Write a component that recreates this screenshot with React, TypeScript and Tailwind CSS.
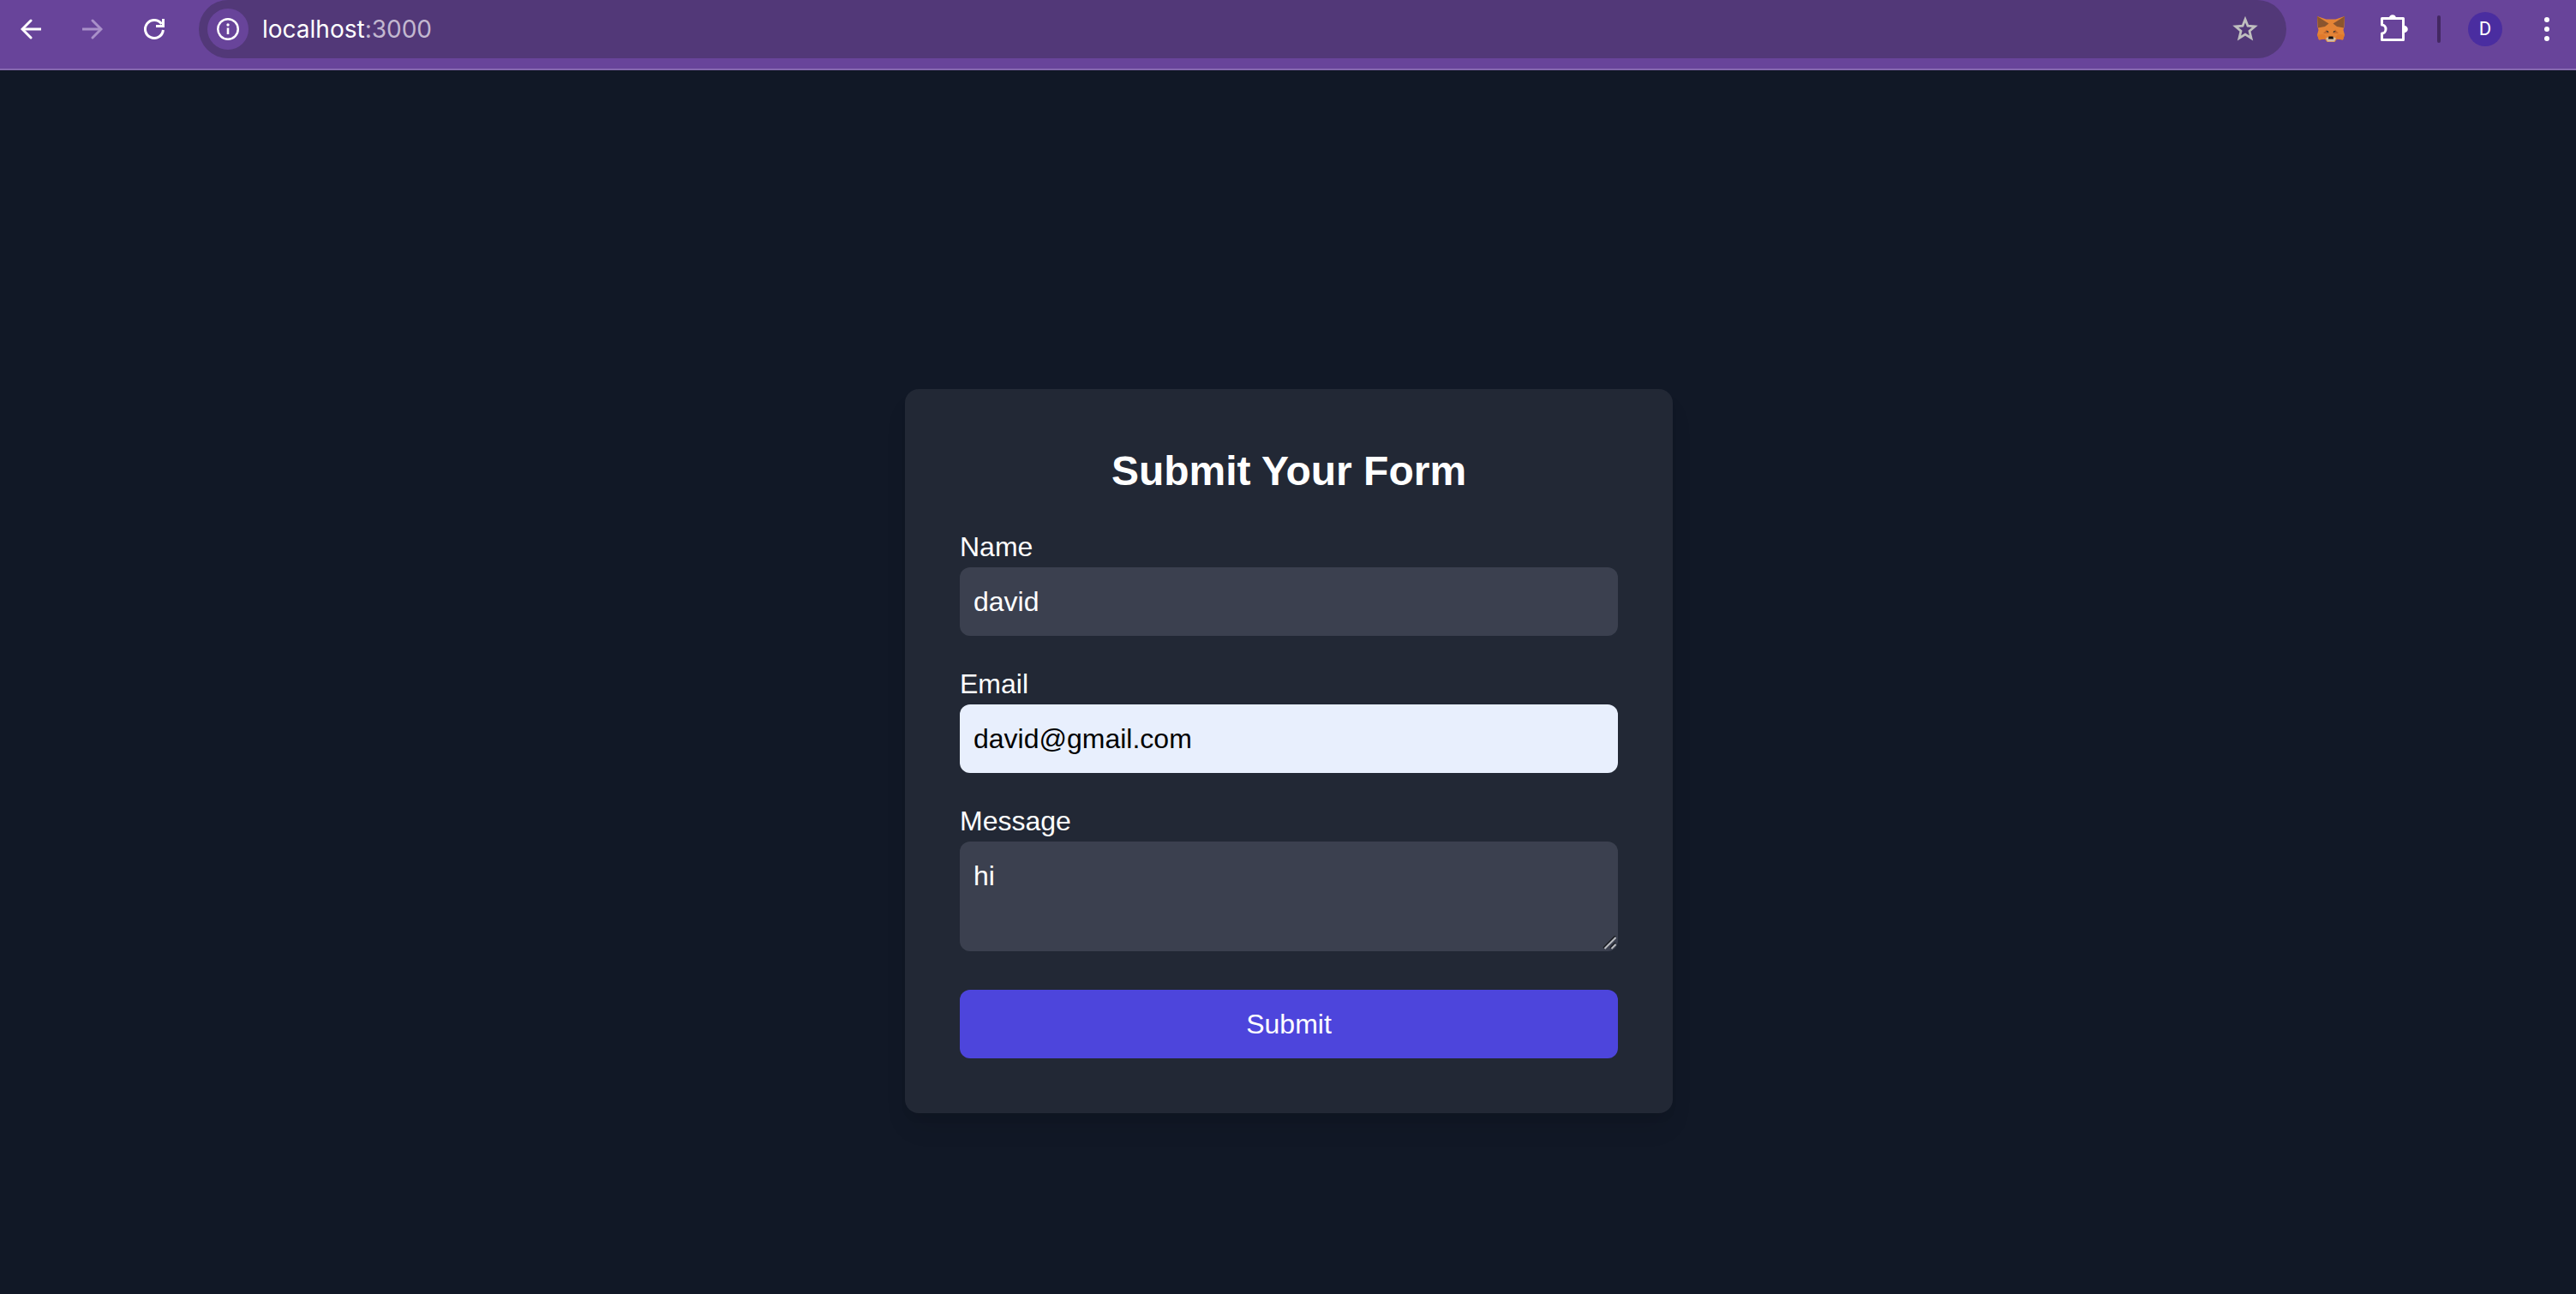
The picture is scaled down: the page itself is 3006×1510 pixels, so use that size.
import React from "react";

function BackIcon() {
  return (
    <svg width="24" height="24" viewBox="0 0 24 24" fill="none" stroke="currentColor" strokeWidth="3" strokeLinecap="round" aria-hidden="true">
      <path d="M12 2 2 12l10 10" />
      <path d="M2.5 12H24" strokeLinecap="butt" />
    </svg>
  );
}

function ForwardIcon() {
  return (
    <svg width="24" height="24" viewBox="0 0 24 24" fill="none" stroke="currentColor" strokeWidth="3" strokeLinecap="round" aria-hidden="true">
      <path d="m12 2 10 10-10 10" />
      <path d="M0 12h21.500" strokeLinecap="butt" />
    </svg>
  );
}

function ReloadIcon() {
  return (
    <svg width="24" height="24" viewBox="0 0 24 24" fill="none" stroke="currentColor" strokeWidth="3" aria-hidden="true">
      <path d="M22.4 13A10.5 10.5 0 1 1 20.6 6" />
      <path d="M14 8.5h8.500V0" />
    </svg>
  );
}

function InfoIcon() {
  return (
    <svg width="26" height="26" viewBox="0 0 26 26" fill="none" stroke="currentColor" aria-hidden="true">
      <circle cx="13" cy="13" r="11.75" strokeWidth="2.5" />
      <path d="M13 11.5V19" strokeWidth="2.6" />
      <circle cx="13" cy="8" r="1.7" fill="currentColor" stroke="none" />
    </svg>
  );
}

function StarIcon() {
  return (
    <svg width="32" height="32" viewBox="0 0 32 32" fill="none" stroke="currentColor" strokeWidth="2.8" aria-hidden="true">
      <path d="m16 4.6 3 7.600 8.300.7-6.300 5.400 2 8.200-7-4.400-7 4.400 2-8.200-6.300-5.400 8.300-.7z" />
    </svg>
  );
}

function FoxIcon() {
  return (
    <svg width="32" height="32" viewBox="0 0 32 32" aria-hidden="true">
      <path d="M0 1 10.500 4.500h11L32 1l-.5 12.500L30.500 17l1.500 5.500-2 6-7-1-2.500 3.500h-9L9 27.500l-7 1-2-6L1.500 17 .5 13.500z" fill="#e48436" />
      <path d="M0 1 13.500 9.500 9 13l-8 1.500z" fill="#8b552e" />
      <path d="M32 1 18.500 9.500 23 13l8 1.500z" fill="#8b552e" />
      <path d="m0 22.500 8-.5 3 4-2 1.500-7 1zM32 22.500l-8-.5-3 4 2 1.500 7 1z" fill="#e07a2c" />
      <path d="m7 21 4-4.500 2.500 4.500zM25 21l-4-4.500-2.500 4.500z" fill="#c66a2b" />
      <path d="m10 18 3 .3.3 2zM22 18l-3 .3-.3 2z" fill="#2e3436" />
      <path d="m10 26.500 3-1h6l3 1-2 4h-8z" fill="#cbbca9" />
      <path d="M13.500 24.500h5l.5 3h-6z" fill="#15110f" />
    </svg>
  );
}

function PuzzleIcon() {
  return (
    <svg width="32" height="32" viewBox="0 0 32 32" fill="none" aria-hidden="true">
      <path d="M1.500 5.500h25v25h-25v-7.500c2.600 0 4.500-2.200 4.500-5s-1.900-5-4.500-5V5.500z" stroke="currentColor" strokeWidth="3" strokeLinejoin="round" />
      <path d="M9.800 5a4.300 4.800 0 0 1 8.400 0zM27 13.700a4.800 4.300 0 0 1 0 8.600z" fill="currentColor" />
    </svg>
  );
}

function MenuIcon() {
  return (
    <svg width="6" height="28" viewBox="0 0 6 28" fill="currentColor" aria-hidden="true">
      <circle cx="3" cy="3" r="3" />
      <circle cx="3" cy="14" r="3" />
      <circle cx="3" cy="25" r="3" />
    </svg>
  );
}

const navButton = "flex h-full w-[72px] shrink-0 items-center justify-center";

function BrowserBar() {
  return (
    <header className="border-b-2 border-[#8568ae] bg-[#68449a] pb-3 text-white">
      <div className="flex h-[68px] items-center">
        <button type="button" aria-label="Back" className={navButton}><BackIcon /></button>
        <button type="button" aria-label="Forward" className={`${navButton} text-[#a990c9]`}><ForwardIcon /></button>
        <button type="button" aria-label="Reload" className={navButton}><ReloadIcon /></button>
        <div className="ml-4 flex h-full min-w-0 flex-1 items-center rounded-full bg-[#523878] pr-8 pl-[10px]">
          <button type="button" aria-label="Site information" className="flex size-12 shrink-0 items-center justify-center rounded-full bg-[#68449a]">
            <InfoIcon />
          </button>
          <div className="ml-4 min-w-0 flex-1 truncate font-['Inter',sans-serif] text-[28px] leading-10">
            localhost<span className="text-[#c3b8d0]">:3000</span>
          </div>
          <button type="button" aria-label="Bookmark this page" className="shrink-0 text-[#bfbfbf]"><StarIcon /></button>
        </div>
        <button type="button" aria-label="MetaMask" className={`${navButton} ml-4`}><FoxIcon /></button>
        <button type="button" aria-label="Extensions" className="flex h-full w-[76px] shrink-0 items-center justify-center pb-1"><PuzzleIcon /></button>
        <div className="ml-3 h-8 w-1 shrink-0 rounded-full bg-[#432862]" />
        <button type="button" aria-label="Profile" className="ml-8 flex size-10 shrink-0 items-center justify-center rounded-full bg-[#4a2da0] font-['Roboto',sans-serif] text-[22px] leading-10">
          D
        </button>
        <button type="button" aria-label="Menu" className="ml-[18px] flex h-full w-[68px] shrink-0 items-center justify-center"><MenuIcon /></button>
      </div>
    </header>
  );
}

function ResizeGrip() {
  return (
    <svg width="16" height="16" viewBox="0 0 16 16" fill="none" className="pointer-events-none absolute right-0.5 bottom-0.5" aria-hidden="true">
      <path d="M1 14 15 0M9 14l6-6" stroke="#17191e" strokeWidth="1.5" />
      <path d="M2.500 15 15.500 2M10.500 15l5-5" stroke="#b9bbc0" strokeWidth="2" />
    </svg>
  );
}

const field = "block w-full rounded-xl p-4 text-[32px] leading-[48px] outline-none";

export default function App() {
  return (
    <div className="flex min-h-screen flex-col bg-[#111826] font-['Liberation_Sans',Arial,sans-serif]">
      <BrowserBar />
      <main className="flex flex-1 items-center justify-center pt-[161px] pl-0.5">
        <form
          onSubmit={(e: React.FormEvent) => e.preventDefault()}
          className="w-full max-w-4xl rounded-2xl bg-[#222835] p-16 text-[32px] leading-[48px] text-white shadow-[0_20px_30px_-6px_rgba(0,0,0,0.1),0_8px_12px_-4px_rgba(0,0,0,0.05)]"
        >
          <h2 className="mb-8 text-center text-5xl leading-[64px] font-bold">Submit Your Form</h2>
          <div className="mb-8">
            <label htmlFor="name" className="block">Name</label>
            <input id="name" type="text" defaultValue="david" className={`${field} bg-[#3b404f]`} />
          </div>
          <div className="mb-8">
            <label htmlFor="email" className="block">Email</label>
            <input id="email" type="email" defaultValue="david@gmail.com" className={`${field} bg-[#e8effd] text-black`} />
          </div>
          <div className="mb-[45px]">
            <label htmlFor="message" className="block">Message</label>
            <div className="relative">
              <textarea id="message" rows={2} defaultValue="hi" className={`${field} resize-none bg-[#3b404f]`} />
              <ResizeGrip />
            </div>
          </div>
          <button type="submit" className={`${field} bg-[#4d45dc]`}>Submit</button>
        </form>
      </main>
    </div>
  );
}
